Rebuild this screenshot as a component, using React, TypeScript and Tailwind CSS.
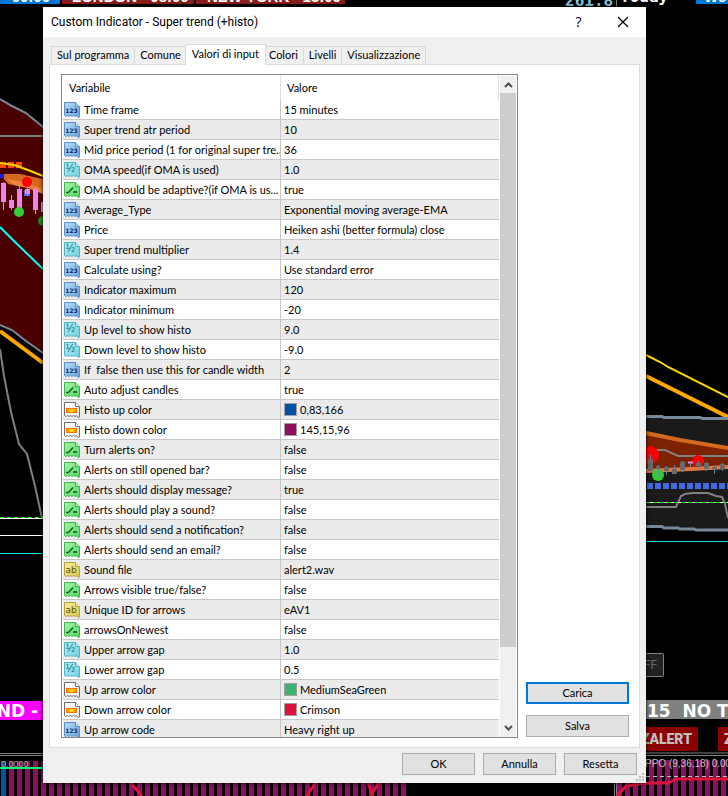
import { useState } from 'react';

type Kind = 'int' | 'double' | 'bool' | 'color' | 'string';

type Input = {
    kind: Kind;
    name: string;
    value: string;
    swatch?: string;
};

const TABS = ['Sul programma', 'Comune', 'Valori di input', 'Colori', 'Livelli', 'Visualizzazione'];

const INPUTS: Input[] = [
    { kind: 'int', name: 'Time frame', value: '15 minutes' },
    { kind: 'int', name: 'Super trend atr period', value: '10' },
    { kind: 'int', name: 'Mid price period (1 for original super tre...', value: '36' },
    { kind: 'double', name: 'OMA speed(if OMA is used)', value: '1.0' },
    { kind: 'bool', name: 'OMA should be adaptive?(if OMA is us...', value: 'true' },
    { kind: 'int', name: 'Average_Type', value: 'Exponential moving average-EMA' },
    { kind: 'int', name: 'Price', value: 'Heiken ashi (better formula) close' },
    { kind: 'double', name: 'Super trend multiplier', value: '1.4' },
    { kind: 'int', name: 'Calculate using?', value: 'Use standard error' },
    { kind: 'int', name: 'Indicator maximum', value: '120' },
    { kind: 'int', name: 'Indicator minimum', value: '-20' },
    { kind: 'double', name: 'Up level to show histo', value: '9.0' },
    { kind: 'double', name: 'Down level to show histo', value: '-9.0' },
    { kind: 'int', name: 'If  false then use this for candle width', value: '2' },
    { kind: 'bool', name: 'Auto adjust candles', value: 'true' },
    { kind: 'color', name: 'Histo up color', value: '0,83,166', swatch: 'bg-[#0053a6]' },
    { kind: 'color', name: 'Histo down color', value: '145,15,96', swatch: 'bg-[#910f60]' },
    { kind: 'bool', name: 'Turn alerts on?', value: 'false' },
    { kind: 'bool', name: 'Alerts on still opened bar?', value: 'false' },
    { kind: 'bool', name: 'Alerts should display message?', value: 'true' },
    { kind: 'bool', name: 'Alerts should play a sound?', value: 'false' },
    { kind: 'bool', name: 'Alerts should send a notification?', value: 'false' },
    { kind: 'bool', name: 'Alerts should send an email?', value: 'false' },
    { kind: 'string', name: 'Sound file', value: 'alert2.wav' },
    { kind: 'bool', name: 'Arrows visible true/false?', value: 'false' },
    { kind: 'string', name: 'Unique ID for arrows', value: 'eAV1' },
    { kind: 'bool', name: 'arrowsOnNewest', value: 'false' },
    { kind: 'double', name: 'Upper arrow gap', value: '1.0' },
    { kind: 'double', name: 'Lower arrow gap', value: '0.5' },
    { kind: 'color', name: 'Up arrow color', value: 'MediumSeaGreen', swatch: 'bg-[#3cb371]' },
    { kind: 'color', name: 'Down arrow color', value: 'Crimson', swatch: 'bg-[#dc143c]' },
    { kind: 'int', name: 'Up arrow code', value: 'Heavy right up' },
];

const ICON_COLORS: Record<Kind, { light: string; dark: string; line: string; ink: string }> = {
    int: { light: '#b9dcfa', dark: '#6aa3dd', line: '#5a8fc6', ink: '#0b2e5c' },
    double: { light: '#b4eef5', dark: '#6fd0e0', line: '#4fb0c2', ink: '#12606e' },
    bool: { light: '#a6f5a6', dark: '#55d565', line: '#3fb14f', ink: '#0c5a1c' },
    color: { light: '#ffffff', dark: '#f2f2f2', line: '#6e6e6e', ink: '#000000' },
    string: { light: '#f8eda0', dark: '#d9c651', line: '#b3a040', ink: '#5e4e08' },
};

function TypeIcon({ kind }: { kind: Kind }) {
    const c = ICON_COLORS[kind];
    return (
        <svg width="16" height="16" viewBox="0 0 16 16" className="block shrink-0" aria-hidden="true">
            <defs>
                <linearGradient id={`paper-${kind}`} x1="0" y1="0" x2="1" y2="1">
                    <stop offset="0" stopColor={c.light} />
                    <stop offset="1" stopColor={c.dark} />
                </linearGradient>
                <linearGradient id="flame" x1="0" y1="0" x2="1" y2="0">
                    <stop offset="0" stopColor="#ff7a00" />
                    <stop offset="0.5" stopColor="#ffee00" />
                    <stop offset="1" stopColor="#ff7a00" />
                </linearGradient>
            </defs>
            {/* torn sheet with a folded corner */}
            <path
                d="M.5 .5H11.5L15.5 4.5V15L14 15.5L12.5 13.5L11 14.5L9.5 13.5L8 14.5L6.5 13.5L5 14.5L3.5 13.5L2 14.5L.5 13.5Z"
                fill={`url(#paper-${kind})`}
                stroke={c.line}
            />
            <path d="M11.5 .5V4.5H15.5" fill={c.light} stroke={c.line} />
            {kind === 'int' && (
                <text x="7.5" y="11" textAnchor="middle" fontFamily="DejaVu Sans" fontWeight="700" fontSize="6" fill={c.ink}>123</text>
            )}
            {kind === 'double' && (
                <text x="1.5" y="10" fontFamily="DejaVu Sans" fontSize="10" fill={c.ink}>½</text>
            )}
            {kind === 'string' && (
                <text x="7" y="11" textAnchor="middle" fontFamily="DejaVu Sans" fontSize="9" fill={c.ink}>ab</text>
            )}
            {kind === 'bool' && (
                <path d="M2 10.5H4.5L9 5.5M9 10H13" fill="none" stroke={c.ink} strokeWidth="1.3" />
            )}
            {kind === 'color' && <rect x="2.5" y="6.5" width="10" height="4" fill="url(#flame)" stroke="#ff7300" />}
        </svg>
    );
}

// histogram columns, one every 8px
function Bars({ from, to, y, height }: { from: number; to: number; y: number; height: number }) {
    const xs: number[] = [];
    for (let x = from; x < to; x += 8) xs.push(x);
    return (
        <>
            {xs.map((x) => (
                <rect key={x} x={x} y={y} width="5" height={height} fill="#910f60" />
            ))}
        </>
    );
}

function LeftChart() {
    return (
        <svg width="410" height="796" viewBox="0 0 410 796" className="absolute top-0 left-0" aria-hidden="true">
            <rect x="0" y="0" width="60" height="4" fill="#0078d7" />
            <rect x="62" y="0" width="132" height="4" fill="#8b1c1c" />
            <rect x="196" y="0" width="149" height="4" fill="#8b1c1c" />
            <g fontFamily="Liberation Sans" fontWeight="700" fontSize="15" fill="#fff">
                <text x="50" y="2" textAnchor="end">- 00:00</text>
                <text x="72" y="2">LONDON - 08:00</text>
                <text x="207" y="2">NEW YORK - 13:00</text>
            </g>

            <path d="M0 99L12 106L26 113L43 127V353L26 341L12 330L0 325Z" fill="#4b0000" />
            <path d="M0 99L12 106L26 113L43 127M0 325L12 330L26 341L43 353" fill="none" stroke="#778899" strokeWidth="2" />
            <path d="M0 136H43" stroke="#808080" strokeWidth="2" />
            <path d="M0 162H6V168H0ZM8 162H14V168H8ZM16 162H22V168H16Z" fill="#ff4500" />
            <path d="M0 174H20L43 179V193L28 188L8 184Z" fill="#d2691e" />
            <path d="M6 179L24 182L43 189V194L28 188L14 185Z" fill="#f08040" />
            <path d="M0 163L14 165L28 170L43 176" fill="none" stroke="#ffd700" strokeWidth="2" />
            <rect x="0" y="174" width="4" height="4" fill="#1e1ee6" />
            <rect x="24" y="190" width="6" height="6" fill="#4169e1" />
            <path d="M3.500 182V210M11.500 195V210M19.500 185V208M27.500 184V196M35.500 188V214" stroke="#ee82ee" />
            <path d="M1 183H6V202H1ZM9 200H14V208H9ZM17 189H22V208H17ZM25 189H30V194H25ZM33 189H38V210H33ZM41 202H43V212H41Z" fill="#ee82ee" />
            <circle cx="27" cy="182" r="5" fill="#ff0000" />
            <circle cx="19" cy="212" r="5" fill="#32cd32" />
            <circle cx="43" cy="221" r="5" fill="#228b22" />
            <path d="M0 227L14 241L43 269" fill="none" stroke="#00ffff" strokeWidth="2" />
            <path d="M0 331L43 363" stroke="#ffa500" strokeWidth="4" />
            <path d="M0 349L4 376L11 412L19 444L27 454L35 486L42 518" fill="none" stroke="#808080" strokeWidth="2" />
            <path d="M0 517.5H43" stroke="#00ff00" strokeDasharray="4 3" />
            <path d="M0 518.5H43M0 535.5H43" stroke="#fff" />
            <path d="M0 553.5H43" stroke="#00e5e5" />

            <rect x="0" y="701" width="43" height="19" fill="#ff00ff" />
            <text x="38" y="717" textAnchor="end" fontFamily="DejaVu Sans" fontWeight="700" fontSize="17" fill="#fff">ND -</text>
            <path d="M0 753.5H43M0 755.5H43" stroke="#808080" />
            <Bars from={9} to={43} y={761} height={35} />
            <rect x="1" y="761" width="5" height="35" fill="#0053a6" />
            <text x="1" y="767" fontFamily="Liberation Sans" fontSize="9" fill="#a0a0a0">0.0000</text>
            <path d="M0 768H43" stroke="#00fa7a" strokeWidth="2" />
            <Bars from={41} to={406} y={783} height={13} />
            <path d="M128 780L142 796M307 796L317 780M367 780L372 794L380 780" fill="none" stroke="#dc143c" strokeWidth="3" />
        </svg>
    );
}

function RightChart() {
    return (
        <svg width="168" height="796" viewBox="560 0 168 796" className="absolute top-0 right-0" aria-hidden="true">
            <text x="565" y="6" fontFamily="DejaVu Sans Mono" fontWeight="700" fontSize="16" fill="#87ceeb">261.8</text>
            <path d="M616.500 0V7" stroke="#808080" />
            <text x="620" y="2" fontFamily="DejaVu Sans Mono" fontWeight="700" fontSize="16" fill="#fff">Today</text>
            <rect x="696" y="0" width="32" height="4" fill="#0078d7" />
            <text x="704" y="2" fontFamily="Liberation Sans" fontWeight="700" fontSize="15" fill="#fff">We</text>

            <path d="M646 355L660 362L668 367L728 397" fill="none" stroke="#ffd700" strokeWidth="2" />
            <path d="M646 376L728 417" stroke="#ffa500" strokeWidth="4" />
            <path d="M646 417L728 419V530L646 526Z" fill="#1a1a1a" />
            <path d="M646 416.500H662L664 417.500H700L702 418.500H728M646 526.500H662L664 528H678L680 529H694L696 530H728" fill="none" stroke="#778899" strokeWidth="3" />
            <path d="M646 432L728 448V466L690 468L646 472Z" fill="#7d2200" />
            <path d="M646 433L680 440L728 448" fill="none" stroke="#d2691e" strokeWidth="4" />
            <path d="M646 471L690 469L728 467" fill="none" stroke="#e8763a" strokeWidth="4" />
            <path d="M646 450H665L678 456H728" fill="none" stroke="#808080" strokeWidth="2" />
            <circle cx="650" cy="455" r="9" fill="#ff0000" />
            <circle cx="698" cy="461" r="6" fill="#ff0000" />
            <circle cx="658" cy="475" r="6" fill="#32cd32" />
            <path d="M688 462.500H693" stroke="#ee82ee" strokeWidth="2" />
            <path d="M650.500 455V472M658.500 465V477M666.500 466V475M674.500 465V474M682.500 461V472M690.500 463V467M698.500 461V469M706.500 462V471M714.500 466V474M722.500 463V471" stroke="#5a8aa8" />
            <path d="M648 459H653V471H648ZM656 466H660V469H656ZM664 467H669V471H664ZM672 469H677V474H672ZM680 462H685V470H680ZM696 463H701V466H696ZM704 463H709V469H704ZM712 467H717V469H712ZM720 464H725V469H720Z" fill="#696969" />
            <path d="M647 486H728" stroke="#4169e1" strokeWidth="6" strokeDasharray="6 2" />
            <path d="M646 507H676L681 496L685 494L693 493H708L716 496L722 497L725 504L728 518" fill="none" stroke="#808080" strokeWidth="2" />
            <path d="M646 502.500H728" stroke="#fff" />
            <path d="M646 502.500H728" stroke="#00ff00" strokeDasharray="4 3" />
            <path d="M646 541.500H728" stroke="#00e5e5" />

            <rect x="630.500" y="653.500" width="33" height="23" rx="1" fill="#222" stroke="#808080" />
            <text x="657" y="669" textAnchor="end" fontFamily="Open Sans" fontSize="13" fill="#6e6e6e">OFF</text>
            <rect x="640" y="700" width="88" height="19" fill="#808080" />
            <text x="647" y="717" fontFamily="DejaVu Sans" fontWeight="700" fontSize="17" fill="#fff" xmlSpace="preserve">15  NO T</text>
            <rect x="640" y="727" width="58" height="24" fill="#8b0000" />
            <rect x="718" y="727" width="20" height="24" fill="#8b0000" />
            <g fontFamily="Roboto" fontWeight="900" fontSize="14" fill="#c0c0c0">
                <text x="692" y="744" textAnchor="end">ZALERT</text>
                <text x="724" y="744">Z</text>
            </g>
            <path d="M614 753H728M614 755.500H728" stroke="#808080" />
            <path d="M614.500 755V796M616.500 755V796" stroke="#808080" />
            <Bars from={617} to={728} y={760} height={36} />
            <text x="645" y="767" fontFamily="Liberation Sans" fontSize="10" fill="#c0c0c0">PPO (9,36,18) 0.000</text>
            <path d="M646 776.500H728" stroke="#c0c0c0" strokeDasharray="4 3" />
            <path d="M617 796L626 786L646 783H668L676 779H728" fill="none" stroke="#dc143c" strokeWidth="3" />
        </svg>
    );
}

function PushButton({ label, primary = false }: { label: string; primary?: boolean }) {
    return (
        <button
            type="button"
            className={
                primary
                    ? 'h-[22px] w-full border-2 border-[#0078d7] bg-[#e1e1e1] text-center leading-[18px]'
                    : 'h-[22px] w-full border border-[#adadad] bg-[#e1e1e1] text-center leading-5'
            }
        >
            {label}
        </button>
    );
}

function ScrollBar() {
    return (
        <div className="mt-px mr-px flex w-4 shrink-0 flex-col bg-[#f0f0f0] pb-px" aria-hidden="true">
            <div className="flex h-[17px] items-center justify-center">
                <svg width="9" height="6" viewBox="0 0 9 6">
                    <path d="M1 5L4.500 1.500L8 5" fill="none" stroke="#505050" strokeWidth="2" />
                </svg>
            </div>
            <div className="h-[554px] bg-[#cdcdcd]" />
            <div className="mt-auto flex h-[17px] items-center justify-center">
                <svg width="9" height="6" viewBox="0 0 9 6">
                    <path d="M1 1L4.500 4.500L8 1" fill="none" stroke="#505050" strokeWidth="2" />
                </svg>
            </div>
        </div>
    );
}

function InputTable() {
    return (
        <div className="flex h-[664px] min-w-0 flex-1 overflow-hidden border border-[#828790] bg-white">
            <div className="min-w-0 flex-1 overflow-hidden pr-px pl-px">
                <table className="w-full table-fixed border-separate border-spacing-0">
                    <colgroup>
                        <col className="w-[218px]" />
                        <col />
                    </colgroup>
                    <thead>
                        <tr className="h-[25px]">
                            <th className="border-r border-[#e0e0e0] p-0 pt-px pl-1.5 text-left font-normal">Variabile</th>
                            <th className="border-r border-[#e0e0e0] p-0 pt-px pl-1.5 text-left font-normal">Valore</th>
                        </tr>
                    </thead>
                    <tbody>
                        {INPUTS.map((input) => (
                            <tr key={input.name} className="h-5 even:bg-[#ebebeb]">
                                <td className="overflow-hidden border-r border-b border-[#c8c8c8] p-0 pl-px">
                                    <div className="flex h-[19px] items-center gap-1 whitespace-pre">
                                        <TypeIcon kind={input.kind} />
                                        <span className="pt-0.5">{input.name}</span>
                                    </div>
                                </td>
                                <td className="overflow-hidden border-b border-[#c8c8c8] p-0 pl-[3px]">
                                    <div className="flex h-[19px] items-center gap-[3px] whitespace-nowrap">
                                        {input.swatch && <span className={`size-[13px] border border-[#a0a0a0] ${input.swatch}`} />}
                                        <span className="pt-0.5">{input.value}</span>
                                    </div>
                                </td>
                            </tr>
                        ))}
                    </tbody>
                </table>
            </div>
            <ScrollBar />
        </div>
    );
}

export default function App() {
    const [tab, setTab] = useState('Valori di input');

    return (
        <div className="relative min-h-screen overflow-hidden bg-black pt-[7px] pr-[82px] pb-[13px] pl-[43px] font-['Lato','Liberation_Sans',sans-serif] text-[11px] text-black">
            <LeftChart />
            <RightChart />

            <main role="dialog" aria-label="Super trend (+histo)" className="relative bg-[#f0f0f0] shadow-[0_0_4px_#000000]">
                <header className="flex h-[30px] items-center bg-white pr-[17px] pl-2">
                    <h1 className="flex-1 font-['Roboto',sans-serif] text-[12px]">Custom Indicator - Super trend (+histo)</h1>
                    <button type="button" aria-label="Guida" className="w-[13px] font-['Open_Sans',sans-serif] text-[14px] leading-4">?</button>
                    <button type="button" aria-label="Chiudi" className="ml-8">
                        <svg width="12" height="12" viewBox="0 0 12 12">
                            <path d="M1 1L11 11M11 1L1 11" stroke="#000" strokeWidth="1.200" />
                        </svg>
                    </button>
                </header>

                <div className="px-1.5 pt-[7px]">
                    <div role="tablist" className="flex items-end pl-0.5">
                        {TABS.map((name) => (
                            <button
                                key={name}
                                type="button"
                                role="tab"
                                aria-selected={name === tab}
                                onClick={() => setTab(name)}
                                className={
                                    name === tab
                                        ? 'relative z-10 -mr-0.5 -mb-px -ml-0.5 h-[21px] border border-b-0 border-[#d9d9d9] bg-white px-1.5 pb-0.5'
                                        : 'h-[18px] border border-b-0 border-l-0 border-[#d9d9d9] px-[5px] first:border-l'
                                }
                            >
                                {name}
                            </button>
                        ))}
                    </div>

                    <section role="tabpanel" className="flex gap-2 border border-[#dcdcdc] bg-white pt-[9px] pr-[10px] pb-[9px] pl-[11px]">
                        <InputTable />
                        <div className="flex w-[103px] shrink-0 flex-col justify-end gap-[11px] pb-px">
                            <PushButton label="Carica" primary />
                            <PushButton label="Salva" />
                        </div>
                    </section>
                </div>

                <footer className="flex justify-end pt-[5px] pr-[9px] pb-2">
                    <div className="grid w-[235px] grid-cols-3 gap-2">
                        <PushButton label="OK" />
                        <PushButton label="Annulla" />
                        <PushButton label="Resetta" />
                    </div>
                </footer>
                <svg width="8" height="8" viewBox="0 0 8 8" className="absolute right-0.5 bottom-0.5" aria-hidden="true">
                    <path d="M6 0H8V2H6ZM3 3H5V5H3ZM6 3H8V5H6ZM0 6H2V8H0ZM3 6H5V8H3ZM6 6H8V8H6Z" fill="#bfbfbf" />
                </svg>
            </main>
        </div>
    );
}
